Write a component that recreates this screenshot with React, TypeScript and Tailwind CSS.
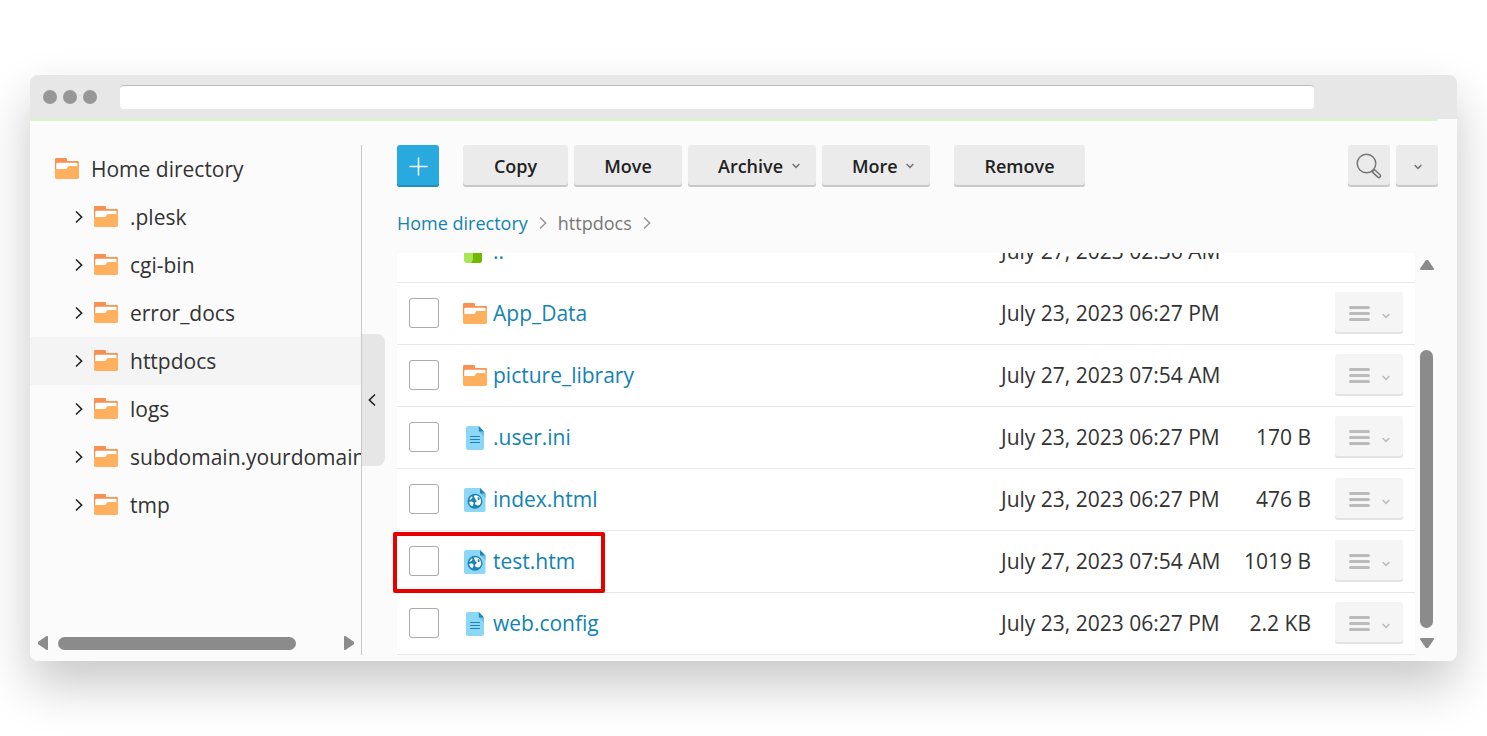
import React from "react";
import { clsx } from "clsx";

type IconKind = "up" | "folder" | "text" | "web";

interface FileRow {
  name: string;
  icon: IconKind;
  date: string;
  size?: string;
}

const FOLDERS = [".plesk", "cgi-bin", "error_docs", "httpdocs", "logs", "subdomain.yourdomain", "tmp"];

const FILES: FileRow[] = [
  { name: "..", icon: "up", date: "July 27, 2023 02:36 AM" },
  { name: "App_Data", icon: "folder", date: "July 23, 2023 06:27 PM" },
  { name: "picture_library", icon: "folder", date: "July 27, 2023 07:54 AM" },
  { name: ".user.ini", icon: "text", date: "July 23, 2023 06:27 PM", size: "170 B" },
  { name: "index.html", icon: "web", date: "July 23, 2023 06:27 PM", size: "476 B" },
  { name: "test.htm", icon: "web", date: "July 27, 2023 07:54 AM", size: "1019 B" },
  { name: "web.config", icon: "text", date: "July 23, 2023 06:27 PM", size: "2.2 KB" },
];

function FolderIcon() {
  return (
    <svg width="24" height="24" viewBox="0 0 24 24" className="shrink-0">
      <path d="M0 2.4A1.400 1.400 0 0 1 1.400 1h9.200A1.400 1.400 0 0 1 12 2.400V4h10.600A1.400 1.400 0 0 1 24 5.400V12H0z" fill="#fa8f51" />
      <path d="M1.200 7A1.200 1.200 0 0 1 2.400 5.800h19A1.200 1.200 0 0 1 22.600 7v7H1.200z" fill="#fff" />
      <path d="M0 12h10.600c1 0 1.400-.5 1.700-1.300.4-1 1-1.700 2.200-1.700H22.600V6.500L24 5.500v15.100a1.400 1.400 0 0 1-1.400 1.400H1.400A1.400 1.400 0 0 1 0 20.600z" fill="#ffb05f" />
    </svg>
  );
}

function UpIcon() {
  return (
    <svg width="24" height="24" viewBox="0 0 24 24" className="shrink-0">
      <rect x="1" y="0" width="18" height="24" rx="3" fill="#a9e559" />
      <path d="M10 0h6a3 3 0 0 1 3 3v18a3 3 0 0 1-3 3H8c1.500-1.500 2-3 2-6z" fill="#72b701" />
    </svg>
  );
}

function TextFileIcon() {
  return (
    <svg width="24" height="24" viewBox="0 0 24 24" className="shrink-0">
      <path d="M5 0h10.500L21 5.500V22a2 2 0 0 1-2 2H5a2 2 0 0 1-2-2V2a2 2 0 0 1 2-2z" fill="#8cd6f6" />
      <path d="M15.500 5L21 10.500V5.500z" fill="#6fc0e4" />
      <path d="M15.800 0L21 5.400h-4.200a1 1 0 0 1-1-1z" fill="#1b84b5" />
      <path d="M7.500 10.500h9M7.500 13.500h9M7.500 16.500h9" stroke="#1b84b5" strokeWidth="1.200" strokeLinecap="round" />
    </svg>
  );
}

function WebFileIcon() {
  return (
    <svg width="24" height="24" viewBox="0 0 24 24" className="shrink-0">
      <path d="M3 0h14l5.500 5.500V22a2 2 0 0 1-2 2H3a2 2 0 0 1-2-2V2a2 2 0 0 1 2-2z" fill="#8cd6f6" />
      <path d="M17 5l5.500 5.500v-5z" fill="#6fc0e4" />
      <path d="M17 0l5.400 5.400H18a1 1 0 0 1-1-1z" fill="#1b84b5" />
      <circle cx="12" cy="13.300" r="7.500" fill="#1b84b5" />
      <path d="M11.400 7.400c2.400-.3 4.800.9 6 3 .9 1.700 1 3.700.1 5.400-.8 1.400-2.200 1.900-3.700 1.400-1.600-.5-2.100-1.500-1.600-2.500.4-.8 1.400-.9 1.500-1.700.1-.7-.7-1-1.200-1.500-.6-.6-.4-1.300-.9-1.900-.5-.7-1.100-1.200-.2-2.200z" fill="#fff" />
      <path d="M15.300 8.900c.9.400 1.600 1.500 1.300 2.500-.3.800-1.500.9-1.800.1-.3-.9-.5-2.200.5-2.600z" fill="#1b84b5" />
      <path d="M8.900 8.300c.8.600.7 1.500-.1 2.200-.8.600-1.500 1.300-2.300 1.500.3-1.500 1.100-2.800 2.400-3.700z" fill="#fff" />
      <path d="M6.200 13.700l2.700-.2c1 .2 1.900.9 1.700 1.900-.2 1.100-.8 1.400-.9 2.300-.1.500-.4.700-.9.400-1.500-1-2.500-2.600-2.600-4.400z" fill="#fff" />
    </svg>
  );
}

const ICONS: Record<IconKind, () => React.JSX.Element> = {
  up: UpIcon,
  folder: FolderIcon,
  text: TextFileIcon,
  web: WebFileIcon,
};

function Chevron({ className }: { className?: string }) {
  return (
    <svg width="8" height="14" viewBox="0 0 8 14" className={clsx("shrink-0", className)} fill="none" stroke="currentColor" strokeWidth="1.600">
      <path d="M1 1.500L6.600 7 1 12.500" />
    </svg>
  );
}

function Caret({ className }: { className?: string }) {
  return (
    <svg width="8" height="6" viewBox="0 0 8 6" className={clsx("shrink-0", className)} fill="none" stroke="currentColor" strokeWidth="1.500">
      <path d="M.6 1L4 4.400 7.400 1" />
    </svg>
  );
}

function Arrow({ className }: { className?: string }) {
  return (
    <svg width="14" height="10" viewBox="0 0 14 10" className={clsx("shrink-0 text-[#8b8b8b]", className)} fill="currentColor">
      <path d="M5.600.6a1.700 1.700 0 0 1 2.800 0l5.300 7.700c.5.800.1 1.700-.8 1.700H1.100C.2 10-.2 9.100.3 8.300z" />
    </svg>
  );
}

interface ToolButtonProps {
  label: string;
  menu?: boolean;
  className?: string;
}

function ToolButton({ label, menu, className }: ToolButtonProps) {
  return (
    <button
      type="button"
      className={clsx(
        "flex h-[42px] items-center rounded-[3px] bg-[#ebebeb] text-[18px] font-semibold text-[#222] shadow-[inset_0_-2px_0_#c8c8c8]",
        menu ? "justify-between pr-4 pl-[30px]" : "justify-center",
        className
      )}
    >
      {label}
      {menu && <Caret className="text-[#777]" />}
    </button>
  );
}

function Sidebar() {
  return (
    <aside className="flex w-[332px] shrink-0 flex-col overflow-hidden border-r border-[#c8c8c8]">
      <ul className="text-[21px] text-[#333]">
        <li className="flex h-12 items-center pl-[25px]">
          <FolderIcon />
          <span className="ml-3 pt-[2px]">Home directory</span>
        </li>
        {FOLDERS.map((name) => (
          <li
            key={name}
            className={clsx(
              "flex h-12 items-center whitespace-nowrap pl-[45px]",
              name === "httpdocs" && "bg-[#f4f4f4]"
            )}
          >
            <button type="button" aria-label={`Expand ${name}`} className="mr-[11px]">
              <Chevron className="text-[#222]" />
            </button>
            <FolderIcon />
            <span className="ml-3 pt-[2px]">{name}</span>
          </li>
        ))}
      </ul>

      {/* Horizontal scrollbar */}
      <div className="mt-auto mb-1 flex h-4 items-center pr-[5px] pl-[6px]">
        <Arrow className="-rotate-90" />
        <div className="ml-2 h-[13px] w-[238px] rounded-full bg-[#8b8b8b]" />
        <Arrow className="ml-auto rotate-90" />
      </div>
    </aside>
  );
}

function FileTable() {
  return (
    <table className="w-full table-fixed border-collapse bg-white text-[21px] text-[#333]">
      <colgroup>
        <col className="w-[66px]" />
        <col />
        <col className="w-[243px]" />
        <col className="w-[91px]" />
        <col className="w-20" />
      </colgroup>
      <tbody>
        {FILES.map((file) => {
          const Icon = ICONS[file.icon];
          const isParent = file.icon === "up";
          return (
            <tr key={file.name} className="h-[62px] border-b border-[#e8e8e8]">
              <td className="pb-[2px] pl-3">
                {!isParent && (
                  <input
                    type="checkbox"
                    aria-label={`Select ${file.name}`}
                    className="block size-[30px] appearance-none rounded-[3px] border border-[#aaa] bg-white"
                  />
                )}
              </td>
              <td>
                <a href="#" className="flex items-center gap-[6px] text-[#1283b3]">
                  <Icon />
                  {file.name}
                </a>
              </td>
              <td className="whitespace-nowrap">{file.date}</td>
              <td className="pr-6 text-right whitespace-nowrap">{file.size}</td>
              <td className="pb-[2px]">
                {!isParent && (
                  <button
                    type="button"
                    aria-label={`Actions for ${file.name}`}
                    className="flex h-[42px] w-[68px] items-center justify-between rounded-[3px] bg-[#f5f5f5] pt-[2px] pr-[13px] pl-[14px] text-[#bbb] shadow-[inset_0_-2px_0_#e3e3e3]"
                  >
                    <svg width="21" height="15" viewBox="0 0 21 15" stroke="currentColor" strokeWidth="3" strokeLinecap="round">
                      <path d="M1.500 1.500h18M1.500 7.500h18M1.500 13.500h18" />
                    </svg>
                    <Caret className="mt-1" />
                  </button>
                )}
              </td>
            </tr>
          );
        })}
      </tbody>
    </table>
  );
}

export default function App() {
  return (
    <div className="min-h-screen overflow-hidden bg-white px-[30px] pt-[75px] font-['Open_Sans',sans-serif]">
      <div className="overflow-hidden rounded-lg bg-[#fbfbfb] shadow-[0_24px_50px_rgba(0,0,0,0.22)]">
        {/* Browser bar */}
        <header className="flex h-11 items-center bg-[#e7e7e7] pr-[143px] pl-[13px]">
          <div className="flex gap-[6px]">
            <span className="size-[14px] rounded-full bg-[#979797]" />
            <span className="size-[14px] rounded-full bg-[#979797]" />
            <span className="size-[14px] rounded-full bg-[#979797]" />
          </div>
          <input
            type="text"
            aria-label="Address"
            className="ml-[23px] h-6 min-w-0 flex-1 rounded-[4px] border-t border-[#bbb] bg-white px-2"
          />
        </header>
        <div className="mr-[19px] h-[2px] rounded-b-[2px] bg-[#d9f5c5]" />

        <div className="flex pt-6 pr-[19px] pb-[6px]">
          <Sidebar />

          <button
            type="button"
            aria-label="Collapse sidebar"
            className="mt-[189px] flex h-[132px] w-[23px] shrink-0 items-center justify-center self-start rounded-r-lg bg-[#e6e6e6] pr-1"
          >
            <Chevron className="rotate-180 text-[#222]" />
          </button>

          <main className="ml-3 min-w-0 flex-1">
            {/* Toolbar */}
            <div className="flex gap-[6px]">
              <button
                type="button"
                aria-label="Add"
                className="mr-[18px] flex size-[42px] items-center justify-center rounded-[3px] bg-[#28aade] pt-px pl-px shadow-[inset_0_-2px_0_#1f8fc0]"
              >
                <svg width="19" height="19" viewBox="0 0 19 19" stroke="#fff" strokeWidth="1.500" strokeLinecap="round">
                  <path d="M9.500 1v17M1 9.500h17" />
                </svg>
              </button>
              <ToolButton label="Copy" className="w-[105px]" />
              <ToolButton label="Move" className="w-[108px]" />
              <ToolButton label="Archive" menu className="w-32" />
              <ToolButton label="More" menu className="w-[108px]" />
              <ToolButton label="Remove" className="ml-[18px] w-[131px]" />
              <button
                type="button"
                aria-label="Search"
                className="ml-auto flex size-[42px] items-center justify-center rounded-[3px] bg-[#ebebeb] shadow-[inset_0_-2px_0_#c8c8c8]"
              >
                <svg width="26" height="26" viewBox="0 0 26 26" fill="none" stroke="#777" strokeWidth="1.500">
                  <circle cx="10.500" cy="10.500" r="9.300" />
                  <path d="M15.800 18.600l1.500-.7 1-1.400 5.700 5.300a1.500 1.500 0 0 1-2.100 2.300z" strokeLinejoin="round" />
                </svg>
              </button>
              <button
                type="button"
                aria-label="Search options"
                className="flex size-[42px] items-center justify-center rounded-[3px] bg-[#ebebeb] pt-[2px] pl-px shadow-[inset_0_-2px_0_#c8c8c8]"
              >
                <Caret className="text-[#777]" />
              </button>
            </div>

            {/* Breadcrumbs */}
            <nav className="mt-5 flex h-8 items-center gap-[11px] text-[18px] text-[#777]">
              <a href="#" className="text-[#1283b3]">Home directory</a>
              <Chevron className="text-[#999]" />
              <span>httpdocs</span>
              <Chevron className="text-[#999]" />
            </nav>

            {/* File list, scrolled to its end */}
            <div className="relative mt-[14px] flex">
              <div className="flex h-[402px] min-w-0 flex-1 flex-col justify-end overflow-hidden">
                <FileTable />
              </div>
              <div className="flex w-[23px] shrink-0 flex-col items-center pt-[7px] pb-[7px]">
                <Arrow />
                <div className="mt-20 w-[13px] flex-1 rounded-full bg-[#8b8b8b]" />
                <Arrow className="mt-[10px] rotate-180" />
              </div>
              <div className="pointer-events-none absolute bottom-[62px] -left-1 h-[61px] w-[212px] rounded-[2px] border-4 border-[#e60000]" />
            </div>
          </main>
        </div>
      </div>
    </div>
  );
}
